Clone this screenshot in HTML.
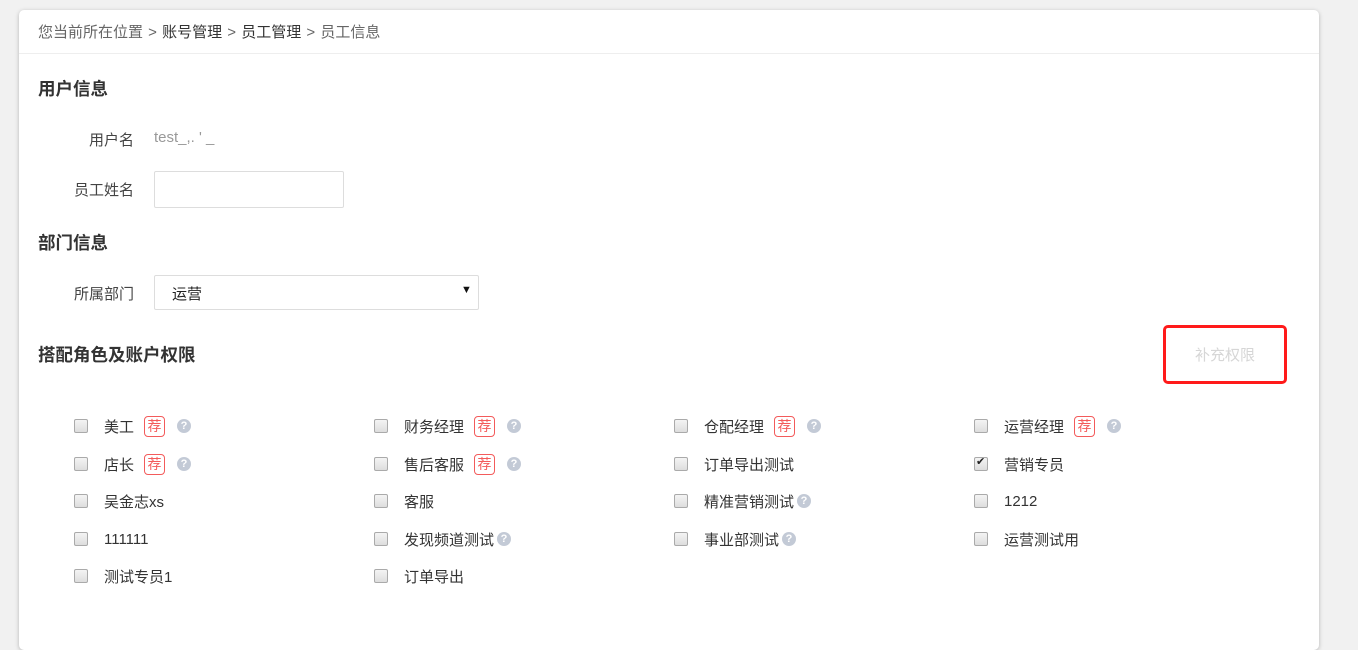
<!DOCTYPE html>
<html><head><meta charset="utf-8"><style>
body{margin:0;width:1358px;height:616px;background:#f1f1f1;font-family:"Liberation Sans","Noto Sans CJK SC",sans-serif;font-size:15px;color:#333;overflow:hidden;position:relative}
.card{position:absolute;left:19px;top:10px;width:1300px;height:640px;background:#fff;border-radius:5px;box-shadow:0 1px 4px rgba(0,0,0,.25)}
.a{position:absolute;white-space:nowrap}
.crumb{left:38px;top:21px;color:#666;font-size:15px;word-spacing:1px}
.line{position:absolute;left:19px;top:53px;width:1300px;height:1px;background:#eee}
h3{position:absolute;margin:0;font-size:17.5px;font-weight:bold;color:#333;left:38px}
.lbl{text-align:right;width:100px;left:34px;color:#444}
.inp{position:absolute;border:1px solid #ddd;border-radius:2px;background:#fff}
.it{position:absolute;display:flex;align-items:center;height:22px;color:#333}
.cb{width:12px;height:12px;border:1px solid #aaa;border-radius:2px;background:linear-gradient(#f4f4f4,#ddd);margin-right:16px;position:relative}
.cb.on::after{content:"✔";position:absolute;left:1px;top:-3px;font-size:11px;color:#222}
.tag{display:inline-block;width:19px;height:19px;border:1px solid #f35b5b;border-radius:4px;color:#f35b5b;font-size:14px;line-height:19px;text-align:center;margin-left:10px}
.q{display:inline-block;width:14px;height:14px;border-radius:50%;background:#c3cad6;color:#fff;font-size:11px;font-weight:bold;line-height:14px;text-align:center;margin-left:12px}
.q.s{margin-left:3px}
</style></head><body>
<div class="card"></div>
<div class="a crumb">您当前所在位置 &gt; <span style="color:#333">账号管理</span> &gt; <span style="color:#333">员工管理</span> &gt; 员工信息</div>
<div class="line"></div>
<h3 style="top:76px">用户信息</h3>
<div class="a lbl" style="top:129px">用户名</div>
<div class="a" style="left:154px;top:129px;color:#999">test_,. ' _</div>
<div class="a lbl" style="top:179px">员工姓名</div>
<div class="inp" style="left:154px;top:171px;width:188px;height:35px"></div>
<h3 style="top:230px">部门信息</h3>
<div class="a lbl" style="top:283px">所属部门</div>
<div class="inp" style="left:154px;top:275px;width:323px;height:33px"></div>
<div class="a" style="left:172px;top:283px;color:#222">运营</div>
<div class="a" style="left:461px;top:284px;font-size:11px;color:#111">▼</div>
<h3 style="top:342px">搭配角色及账户权限</h3>
<div class="a" style="left:1163px;top:325px;width:118px;height:53px;border:3px solid #ff1a1a;border-radius:5px;"></div>
<div class="a" style="left:1195px;top:344px;color:#d6d6d6">补充权限</div>

<div class="it" style="left:74px;top:415px"><span class="cb"></span>美工<span class="tag">荐</span><span class="q">?</span></div>
<div class="it" style="left:374px;top:415px"><span class="cb"></span>财务经理<span class="tag">荐</span><span class="q">?</span></div>
<div class="it" style="left:674px;top:415px"><span class="cb"></span>仓配经理<span class="tag">荐</span><span class="q">?</span></div>
<div class="it" style="left:974px;top:415px"><span class="cb"></span>运营经理<span class="tag">荐</span><span class="q">?</span></div>

<div class="it" style="left:74px;top:453px"><span class="cb"></span>店长<span class="tag">荐</span><span class="q">?</span></div>
<div class="it" style="left:374px;top:453px"><span class="cb"></span>售后客服<span class="tag">荐</span><span class="q">?</span></div>
<div class="it" style="left:674px;top:453px"><span class="cb"></span>订单导出测试</div>
<div class="it" style="left:974px;top:453px"><span class="cb on"></span>营销专员</div>

<div class="it" style="left:74px;top:490px"><span class="cb"></span>吴金志xs</div>
<div class="it" style="left:374px;top:490px"><span class="cb"></span>客服</div>
<div class="it" style="left:674px;top:490px"><span class="cb"></span>精准营销测试<span class="q s">?</span></div>
<div class="it" style="left:974px;top:490px"><span class="cb"></span>1212</div>

<div class="it" style="left:74px;top:528px"><span class="cb"></span>111111</div>
<div class="it" style="left:374px;top:528px"><span class="cb"></span>发现频道测试<span class="q s">?</span></div>
<div class="it" style="left:674px;top:528px"><span class="cb"></span>事业部测试<span class="q s">?</span></div>
<div class="it" style="left:974px;top:528px"><span class="cb"></span>运营测试用</div>

<div class="it" style="left:74px;top:565px"><span class="cb"></span>测试专员1</div>
<div class="it" style="left:374px;top:565px"><span class="cb"></span>订单导出</div>
</body></html>
